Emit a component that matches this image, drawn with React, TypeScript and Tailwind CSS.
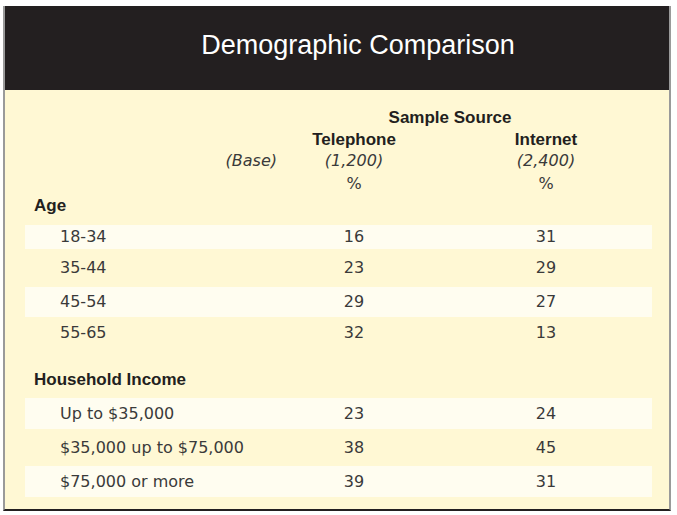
import React from 'react';

type Row = { label: string; tel: string; net: string; h: string; striped: boolean };

const ageRows: Row[] = [
  { label: '18-34', tel: '16', net: '31', h: 'h-[24px]', striped: true },
  { label: '35-44', tel: '23', net: '29', h: 'h-[38px]', striped: false },
  { label: '45-54', tel: '29', net: '27', h: 'h-[30px]', striped: true },
  { label: '55-65', tel: '32', net: '13', h: 'h-[31px]', striped: false },
];

const incomeRows: Row[] = [
  { label: 'Up to $35,000', tel: '23', net: '24', h: 'h-[31px]', striped: true },
  { label: '$35,000 up to $75,000', tel: '38', net: '45', h: 'h-[37px]', striped: false },
  { label: '$75,000 or more', tel: '39', net: '31', h: 'h-[31px]', striped: true },
];

const grid = 'grid grid-cols-[233px_192px_192px_10px] items-center';
const bodyFont = "font-['DejaVu_Sans',sans-serif] text-[16px] text-[#3a3a3a]";
const boldFont = "font-['Liberation_Sans',Arial,sans-serif] font-bold text-[17px] text-[#231f20]";

const DataRow = ({ row }: { row: Row }) => (
  <div className={`${grid} ${row.h} ${bodyFont} ${row.striped ? 'bg-[#fffdf0]' : ''}`}>
    <div className="pl-[35px]">{row.label}</div>
    <div className="text-center">{row.tel}</div>
    <div className="text-center">{row.net}</div>
    <div />
  </div>
);

export default function App() {
  return (
    <div className="w-[677px] h-[515px] bg-white pt-[6px] pl-[3px]">
      <div className="w-[668px] border-x-2 border-x-[#9a9a9a] border-b-2 border-b-[#231f20]">
        {/* Title bar */}
        <div className="h-[84px] bg-[#231f20] flex items-center justify-center pl-[42px] pb-[6px]">
          <h1 className="font-['Liberation_Sans',Arial,sans-serif] text-[27px] text-white font-normal">
            Demographic Comparison
          </h1>
        </div>

        {/* Table body */}
        <div className="bg-[#fff8d4] pt-[15px] pl-[20px] pr-[17px] pb-[12px]">
          <div className={`${grid} h-[22px] ${boldFont}`}>
            <div />
            <div className="col-span-2 text-center">Sample Source</div>
            <div />
          </div>
          <div className={`${grid} h-[22px] ${boldFont}`}>
            <div />
            <div className="text-center">Telephone</div>
            <div className="text-center">Internet</div>
            <div />
          </div>
          <div className={`${grid} h-[23px] ${bodyFont} italic`}>
            <div className="text-right -mr-[19px]">(Base)</div>
            <div className="text-center">(1,200)</div>
            <div className="text-center">(2,400)</div>
            <div />
          </div>
          <div className={`${grid} h-[22px] ${bodyFont}`}>
            <div />
            <div className="text-center">%</div>
            <div className="text-center">%</div>
            <div />
          </div>

          <div className={`h-[24px] flex items-center pl-[9px] mb-[7px] ${boldFont}`}>Age</div>
          {ageRows.map((r) => (
            <DataRow key={r.label} row={r} />
          ))}

          <div className={`h-[24px] flex items-center pl-[9px] mt-[20px] mb-[6px] ${boldFont}`}>
            Household Income
          </div>
          {incomeRows.map((r) => (
            <DataRow key={r.label} row={r} />
          ))}
        </div>
      </div>
    </div>
  );
}
